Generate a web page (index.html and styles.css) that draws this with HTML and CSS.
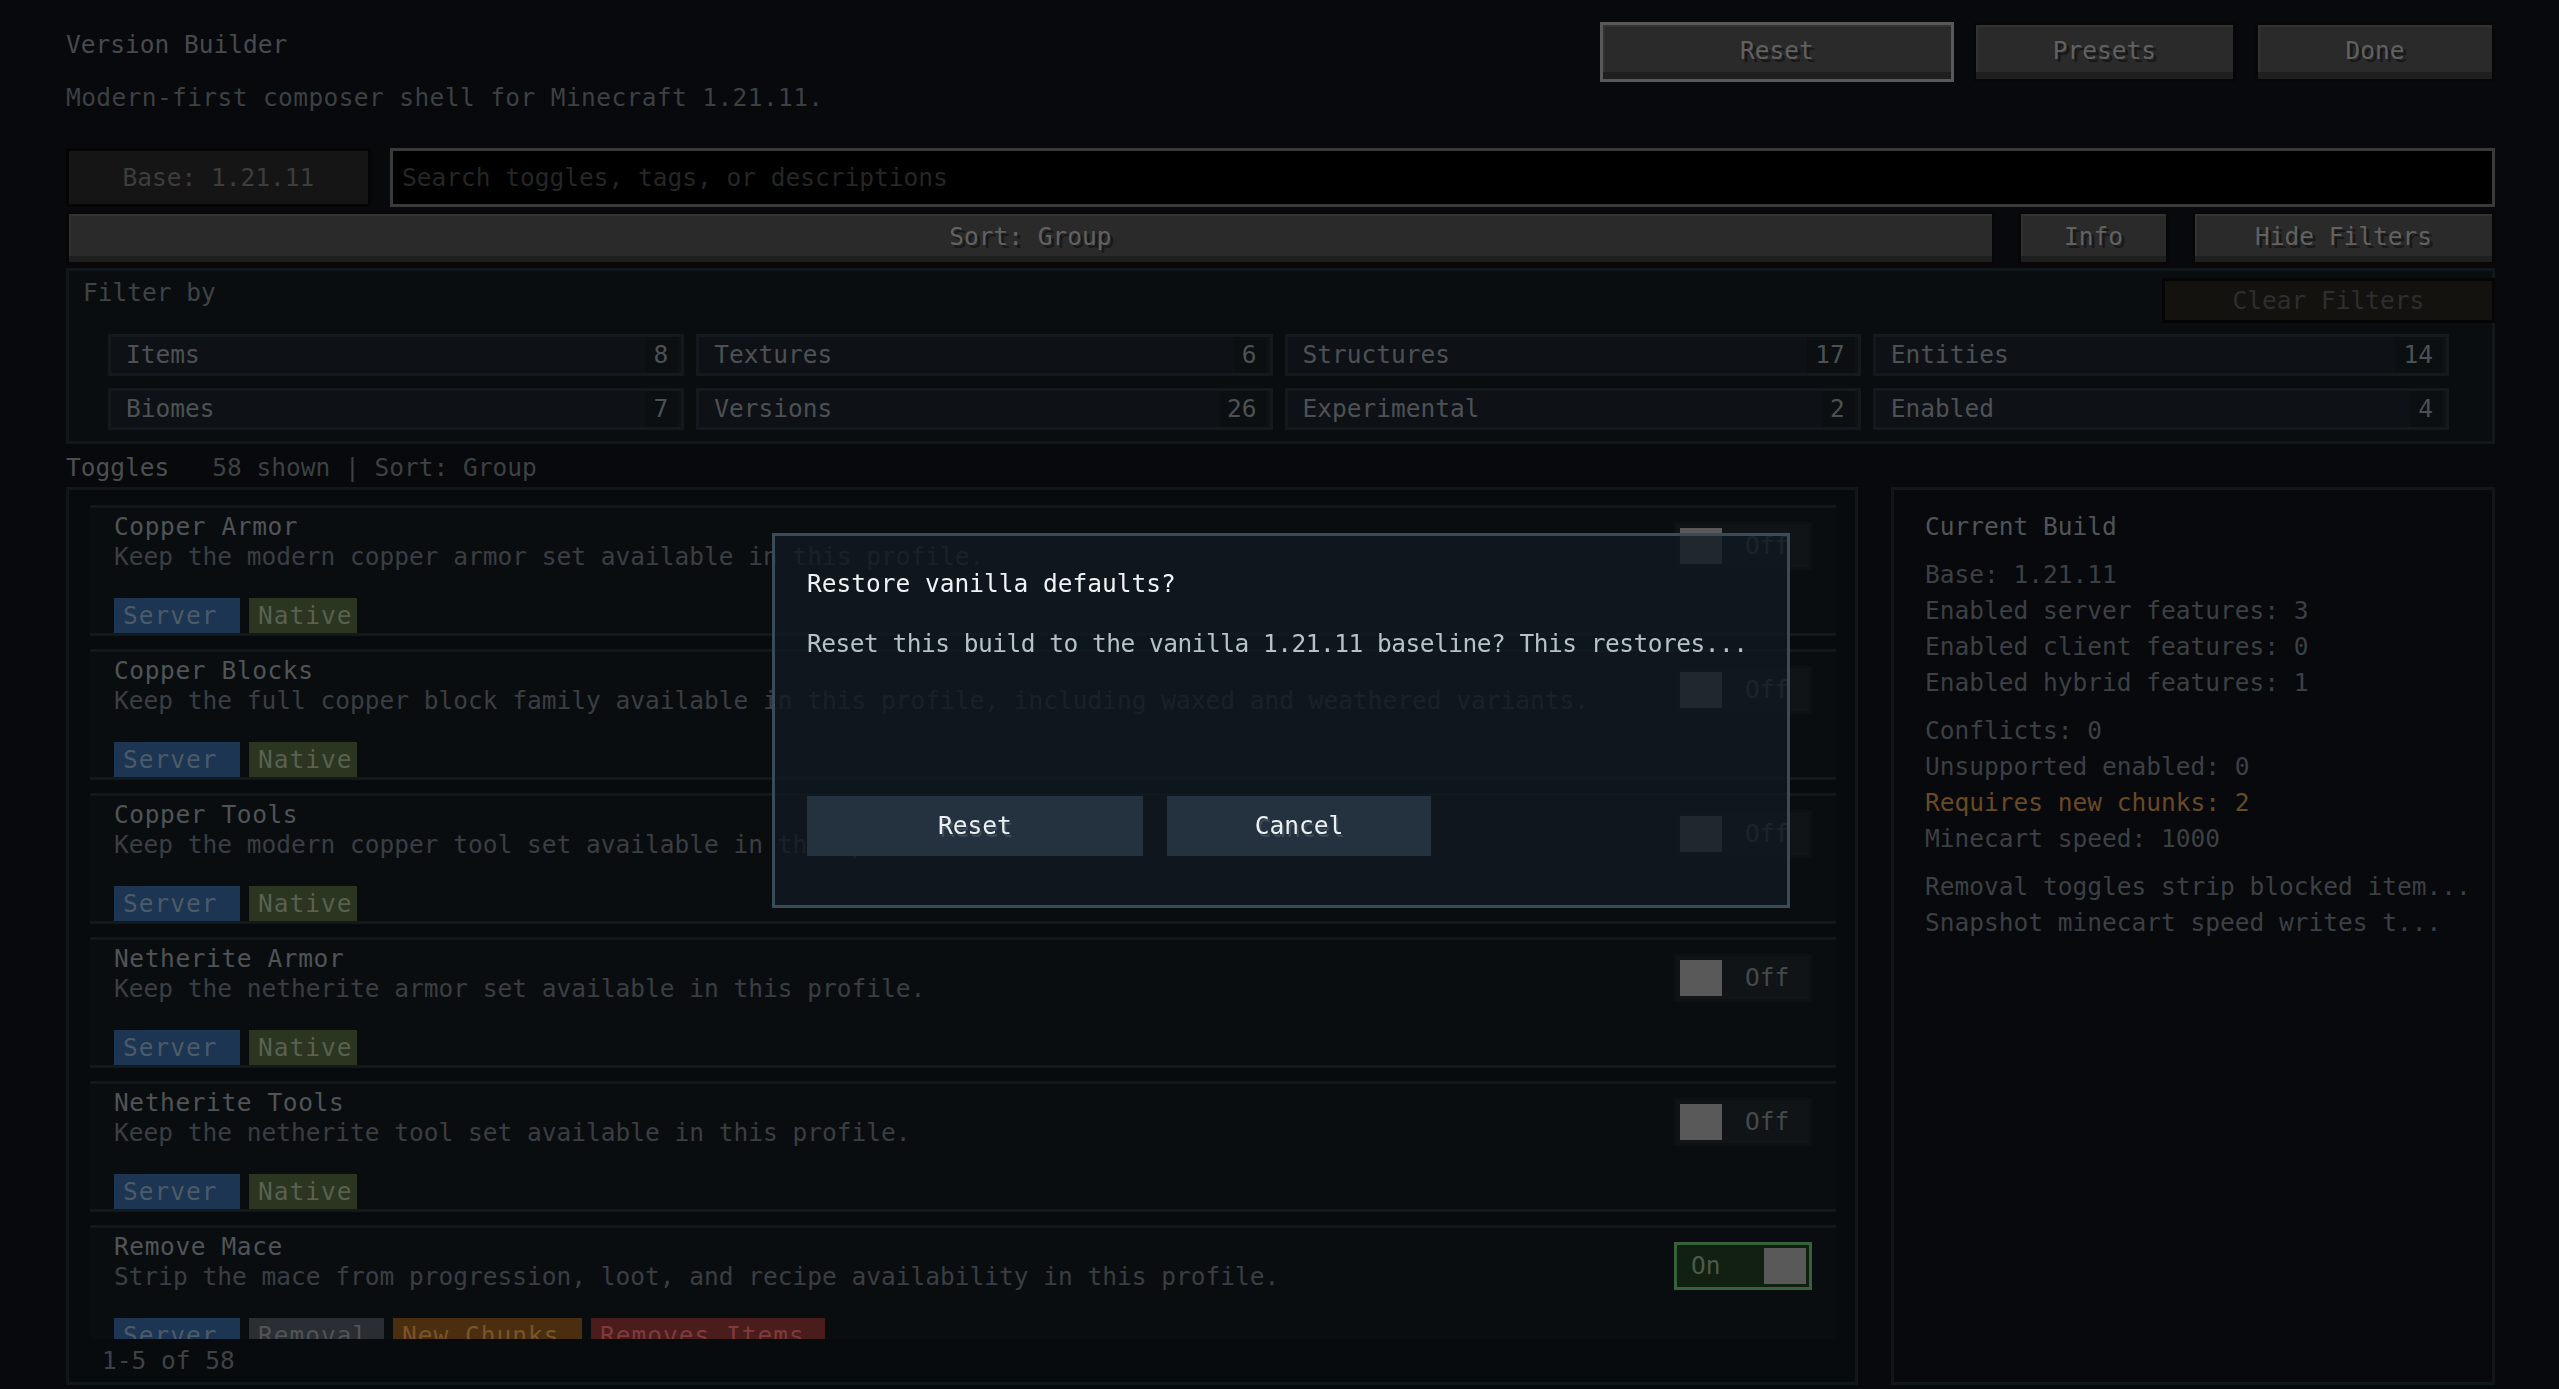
FILE: index.html
```html
<!DOCTYPE html>
<html lang="en">

<head>
    <meta charset="UTF-8">
    <title>Version Builder</title>
    <link rel="stylesheet" href="styles.css">
</head>

<body>
    <div class="screen">
        <!-- Header -->
        <header class="topbar">
            <div class="heading">
                <h1>Version Builder</h1>
                <p>Modern-first composer shell for Minecraft 1.21.11.</p>
            </div>
            <div class="actions">
                <button class="mc-btn focused btn-reset">Reset</button>
                <button class="mc-btn btn-presets">Presets</button>
                <button class="mc-btn btn-done">Done</button>
            </div>
        </header>

        <!-- Base + search -->
        <div class="toolbar">
            <div class="base-box">Base: 1.21.11</div>
            <input class="search" type="text" placeholder="Search toggles, tags, or descriptions">
        </div>

        <div class="sortbar">
            <button class="mc-btn btn-sort">Sort: Group</button>
            <button class="mc-btn btn-info">Info</button>
            <button class="mc-btn btn-hide">Hide Filters</button>
        </div>

        <!-- Filters -->
        <section class="filters">
            <div class="filters-head">
                <span>Filter by</span>
                <button class="clear-btn">Clear Filters</button>
            </div>
            <div class="chip-grid">
                <div class="chip"><span>Items</span><span class="count">8</span></div>
                <div class="chip"><span>Textures</span><span class="count">6</span></div>
                <div class="chip"><span>Structures</span><span class="count">17</span></div>
                <div class="chip"><span>Entities</span><span class="count">14</span></div>
                <div class="chip"><span>Biomes</span><span class="count">7</span></div>
                <div class="chip"><span>Versions</span><span class="count">26</span></div>
                <div class="chip"><span>Experimental</span><span class="count">2</span></div>
                <div class="chip"><span>Enabled</span><span class="count">4</span></div>
            </div>
        </section>

        <div class="list-head">
            <span class="label">Toggles</span><span class="meta">58 shown | Sort: Group</span>
        </div>

        <div class="main">
            <!-- Toggle list -->
            <section class="toggle-panel">
                <div class="toggle-scroll">
                    <div class="toggle-row">
                        <div class="row-text">
                            <div class="row-title">Copper Armor</div>
                            <div class="row-desc">Keep the modern copper armor set available in this profile.</div>
                            <div class="tags">
                                <span class="tag server">Server</span>
                                <span class="tag native">Native</span>
                            </div>
                        </div>
                        <div class="switch"><span class="knob"></span><span>Off</span></div>
                    </div>
                    <div class="toggle-row">
                        <div class="row-text">
                            <div class="row-title">Copper Blocks</div>
                            <div class="row-desc">Keep the full copper block family available in this profile, including waxed and weathered variants.</div>
                            <div class="tags">
                                <span class="tag server">Server</span>
                                <span class="tag native">Native</span>
                            </div>
                        </div>
                        <div class="switch"><span class="knob"></span><span>Off</span></div>
                    </div>
                    <div class="toggle-row">
                        <div class="row-text">
                            <div class="row-title">Copper Tools</div>
                            <div class="row-desc">Keep the modern copper tool set available in this profile.</div>
                            <div class="tags">
                                <span class="tag server">Server</span>
                                <span class="tag native">Native</span>
                            </div>
                        </div>
                        <div class="switch"><span class="knob"></span><span>Off</span></div>
                    </div>
                    <div class="toggle-row">
                        <div class="row-text">
                            <div class="row-title">Netherite Armor</div>
                            <div class="row-desc">Keep the netherite armor set available in this profile.</div>
                            <div class="tags">
                                <span class="tag server">Server</span>
                                <span class="tag native">Native</span>
                            </div>
                        </div>
                        <div class="switch"><span class="knob"></span><span>Off</span></div>
                    </div>
                    <div class="toggle-row">
                        <div class="row-text">
                            <div class="row-title">Netherite Tools</div>
                            <div class="row-desc">Keep the netherite tool set available in this profile.</div>
                            <div class="tags">
                                <span class="tag server">Server</span>
                                <span class="tag native">Native</span>
                            </div>
                        </div>
                        <div class="switch"><span class="knob"></span><span>Off</span></div>
                    </div>
                    <div class="toggle-row">
                        <div class="row-text">
                            <div class="row-title">Remove Mace</div>
                            <div class="row-desc">Strip the mace from progression, loot, and recipe availability in this profile.</div>
                            <div class="tags">
                                <span class="tag server">Server</span>
                                <span class="tag removal">Removal</span>
                                <span class="tag chunks">New Chunks</span>
                                <span class="tag removes">Removes Items</span>
                            </div>
                        </div>
                        <div class="switch on"><span>On</span><span class="knob"></span></div>
                    </div>
                </div>
                <div class="pager">1-5 of 58</div>
            </section>

            <!-- Summary -->
            <aside class="build-panel">
                <div class="build-title">Current Build</div>
                <div class="group">
                    <div>Base: 1.21.11</div>
                    <div>Enabled server features: 3</div>
                    <div>Enabled client features: 0</div>
                    <div>Enabled hybrid features: 1</div>
                </div>
                <div class="group">
                    <div>Conflicts: 0</div>
                    <div>Unsupported enabled: 0</div>
                    <div class="warn">Requires new chunks: 2</div>
                    <div>Minecart speed: 1000</div>
                </div>
                <div class="group">
                    <div>Removal toggles strip blocked item...</div>
                    <div>Snapshot minecart speed writes t...</div>
                </div>
            </aside>
        </div>
    </div>

    <!-- Confirm dialog -->
    <div class="modal">
        <div class="modal-title">Restore vanilla defaults?</div>
        <div class="modal-body">Reset this build to the vanilla 1.21.11 baseline? This restores...</div>
        <div class="modal-actions">
            <button class="modal-btn confirm">Reset</button>
            <button class="modal-btn cancel">Cancel</button>
        </div>
    </div>
</body>

</html>
```

FILE: styles.css
```css
body {
    margin: 0;
    background-color: #07090c;
    font-family: "DejaVu Sans Mono", monospace;
    font-size: 24.5px;
    line-height: 30px;
    color: #45494c;
    overflow: hidden;
}

.screen {
    box-sizing: border-box;
    height: 100vh;
    padding: 22px 64px 0 66px;
}

/* Header */
.topbar {
    display: flex;
    justify-content: space-between;
    align-items: flex-start;
    height: 126px;
}

.heading h1 {
    margin: 8px 0 0;
    font-size: inherit;
    font-weight: normal;
    color: #474a4d;
}

.heading p {
    margin: 23px 0 0;
    color: #3d4043;
    letter-spacing: 0.4px;
}

.actions {
    display: flex;
    gap: 19px;
}

.mc-btn {
    font: inherit;
    height: 60px;
    padding: 0 0 3px;
    color: #616161;
    background-color: #2a2a2a;
    border: 3px solid #070707;
    box-shadow: inset 0 -7px 0 #1f1f1f, inset 2px 2px 0 #323232;
    text-shadow: 3px 3px 0 #181818;
    cursor: pointer;
}

.mc-btn.focused {
    border-color: #585858;
}

.btn-reset { width: 354px; }
.btn-presets { width: 263px; }
.btn-done { width: 240px; }

/* Base + search */
.toolbar {
    display: flex;
    gap: 19px;
    height: 59px;
}

.base-box {
    box-sizing: border-box;
    width: 305px;
    background-color: #151515;
    border: 3px solid #050505;
    color: #3d3d3d;
    text-align: center;
    line-height: 53px;
}

.search {
    flex: 1;
    box-sizing: border-box;
    height: 59px;
    padding: 0 9px;
    font: inherit;
    color: #8a8a8a;
    background-color: #000;
    border: 3px solid #3a3a3a;
    outline: none;
}

.search::placeholder {
    color: #262626;
}

.sortbar {
    display: flex;
    gap: 23px;
    margin-top: 4px;
}

.sortbar .mc-btn {
    height: 54px;
    box-shadow: inset 0 -6px 0 #1f1f1f, inset 2px 2px 0 #323232;
}

.btn-sort { flex: 1; }
.btn-info { width: 151px; }
.btn-hide { width: 303px; }

/* Filters */
.filters {
    box-sizing: border-box;
    height: 176px;
    margin-top: 3px;
    padding: 7px 0 0 14px;
    background-color: #0a0d10;
    border: 3px solid #12171b;
}

.filters-head {
    display: flex;
    justify-content: space-between;
    align-items: flex-start;
    margin-right: -3px;
    color: #3f4346;
}

.clear-btn {
    font: inherit;
    width: 333px;
    height: 45px;
    padding: 0;
    color: #2e2e2e;
    background-color: #14120f;
    border: 3px solid #050505;
}

.chip-grid {
    display: grid;
    grid-template-columns: repeat(4, 1fr);
    gap: 12px;
    margin: 11px 43px 0 25px;
}

.chip {
    box-sizing: border-box;
    height: 42px;
    display: flex;
    justify-content: space-between;
    padding-left: 15px;
    line-height: 36px;
    color: #4d5154;
    background-color: #0e1216;
    border: 3px solid #14191d;
}

.chip .count {
    padding: 0 10px 0 8px;
    margin-right: 3px;
    background-color: #0b0f12;
}

.list-head {
    box-sizing: border-box;
    height: 43px;
    padding-top: 9px;
}

.list-head .label {
    color: #4b4f52;
}

.list-head .meta {
    margin-left: 43px;
    color: #3d4144;
}

/* Main area */
.main {
    display: flex;
    gap: 33px;
    height: 898px;
}

.toggle-panel {
    box-sizing: border-box;
    width: 1792px;
    background-color: #080b0e;
    border: 3px solid #11161a;
}

.toggle-scroll {
    box-sizing: border-box;
    height: 849px;
    overflow: hidden;
    padding: 15px 19px 0 21px;
}

.toggle-row {
    box-sizing: border-box;
    height: 131px;
    margin-bottom: 13px;
    padding: 4px 24px 0;
    display: flex;
    justify-content: space-between;
    align-items: flex-start;
    background-color: #0a0d10;
    border-top: 3px solid #13181c;
    border-bottom: 3px solid #13181c;
}

.row-title {
    color: #505457;
    letter-spacing: 0.6px;
}

.row-desc {
    color: #3a3e42;
    white-space: nowrap;
}

.tags {
    display: flex;
    gap: 9px;
    margin-top: 26px;
}

.tag {
    box-sizing: border-box;
    height: 35px;
    line-height: 35px;
    padding-left: 9px;
    letter-spacing: 1px;
}

.tag.server { width: 126px; background-color: #1c3553; color: #4d5a68; }
.tag.native { width: 108px; background-color: #2b3520; color: #5a604f; }
.tag.removal { width: 135px; background-color: #2a2d32; color: #505357; }
.tag.chunks { width: 189px; background-color: #4a2e0f; color: #7a5527; }
.tag.removes { width: 234px; background-color: #4a1c1c; color: #7d3b3b; }

.switch {
    box-sizing: border-box;
    flex: none;
    width: 138px;
    height: 48px;
    margin-top: 10px;
    padding: 0 3px;
    display: flex;
    align-items: center;
    gap: 23px;
    color: #45494c;
    background-color: #101417;
    border: 3px solid #0d1114;
}

.switch .knob {
    width: 42px;
    height: 36px;
    background-color: #595959;
}

.switch.on {
    justify-content: space-between;
    padding-left: 14px;
    color: #4a5b4a;
    background-color: #112011;
    border-color: #37613a;
}

.pager {
    padding: 7px 0 0 33px;
    color: #3e4246;
}

.build-panel {
    box-sizing: border-box;
    width: 604px;
    padding: 19px 20px 0 31px;
    line-height: 36px;
    color: #3c4044;
    white-space: nowrap;
    background-color: #07090c;
    border: 3px solid #11161a;
}

.build-title {
    color: #505457;
}

.build-panel .group {
    margin-top: 12px;
}

.build-panel .warn {
    color: #6a4a22;
}

/* Confirm dialog */
.modal {
    position: fixed;
    top: 533px;
    left: 772px;
    box-sizing: border-box;
    width: 1018px;
    height: 375px;
    padding: 33px 32px 0;
    background-color: rgba(17, 25, 33, 0.78);
    border: 3px solid #3b4a57;
}

.modal-title {
    color: #f1f4f6;
}

.modal-body {
    margin-top: 30px;
    color: #b6c2ca;
    letter-spacing: -0.5px;
    white-space: nowrap;
}

.modal-actions {
    display: flex;
    gap: 24px;
    margin-top: 137px;
}

.modal-btn {
    font: inherit;
    height: 60px;
    padding: 0;
    color: #eaf0f3;
    background-color: #243240;
    border: none;
    text-shadow: 2px 3px 0 #3e4a55;
    cursor: pointer;
}

.modal-btn.confirm { width: 336px; }
.modal-btn.cancel { width: 264px; }
```
